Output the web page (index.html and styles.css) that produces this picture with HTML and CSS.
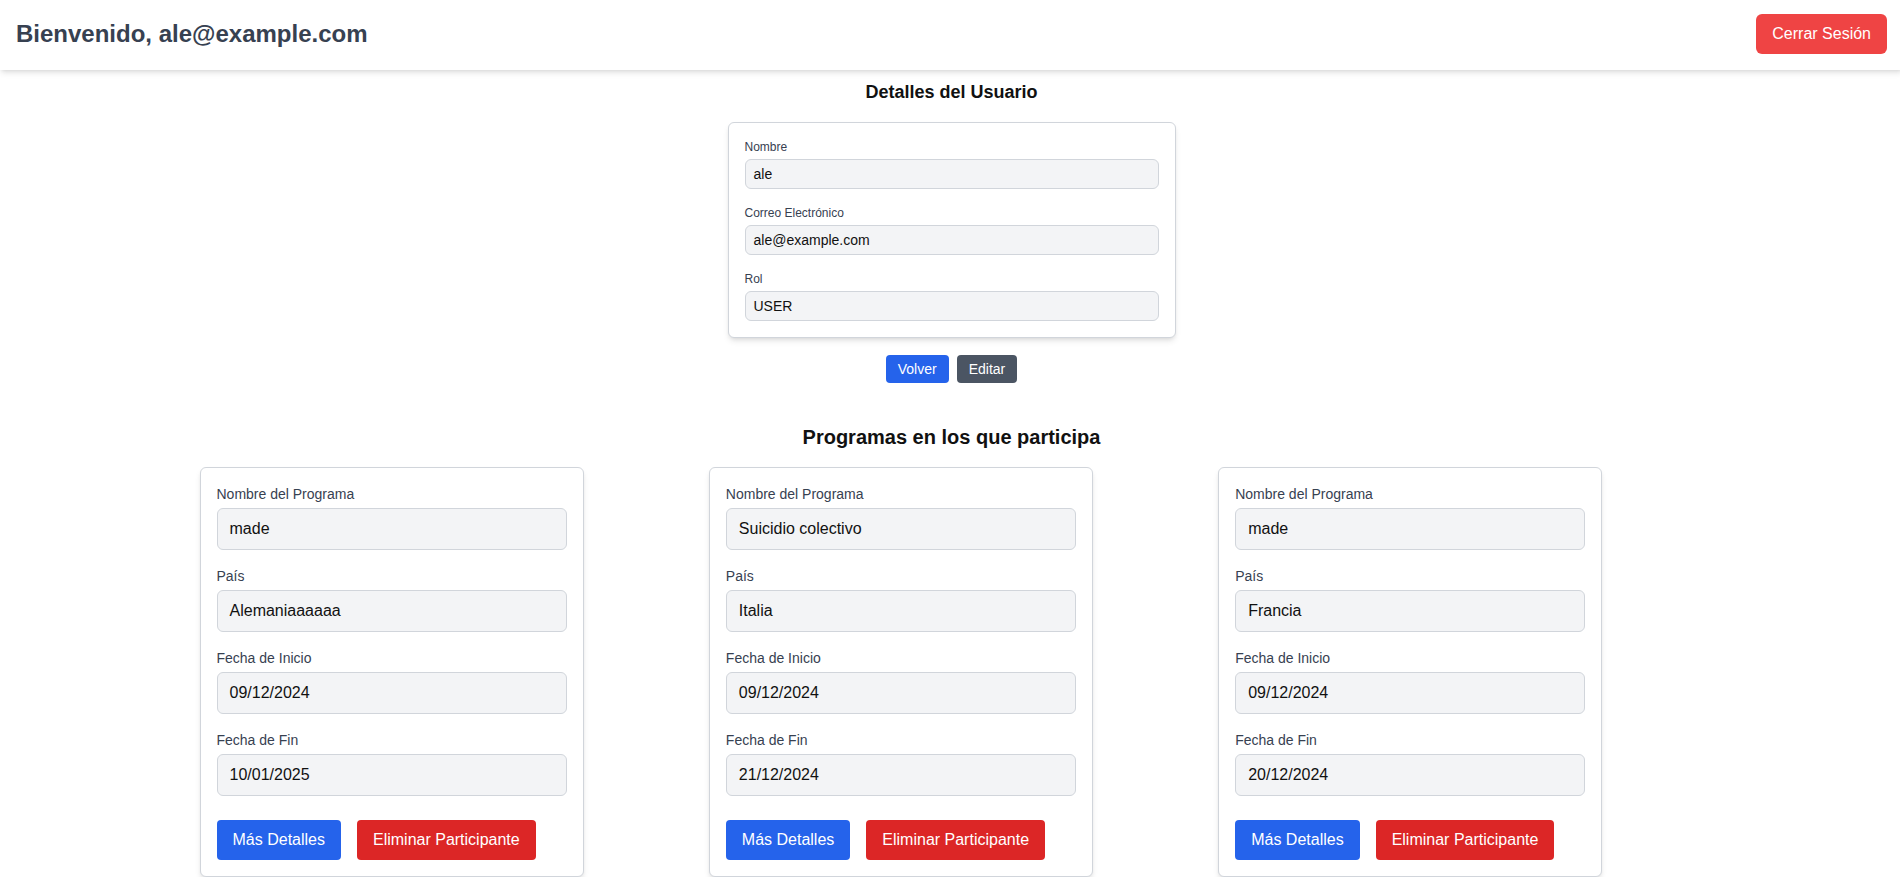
FILE: index.html
```html
<!DOCTYPE html>
<html lang="es">
<head>
<meta charset="utf-8">
<title>Bienvenido</title>
<link rel="stylesheet" href="styles.css">
</head>
<body>
<div class="app">
  <header class="topbar">
    <h1 class="welcome">Bienvenido, ale@example.com</h1>
    <button class="btn btn-logout">Cerrar Sesión</button>
  </header>

  <main class="main">
    <section class="user-section">
      <h2 class="section-title">Detalles del Usuario</h2>
      <div class="user-card">
        <div class="ufield">
          <label class="ulabel">Nombre</label>
          <div class="uinput">ale</div>
        </div>
        <div class="ufield">
          <label class="ulabel">Correo Electrónico</label>
          <div class="uinput">ale@example.com</div>
        </div>
        <div class="ufield">
          <label class="ulabel">Rol</label>
          <div class="uinput">USER</div>
        </div>
      </div>
      <div class="user-actions">
        <button class="btn btn-sm btn-blue">Volver</button>
        <button class="btn btn-sm btn-gray">Editar</button>
      </div>
    </section>

    <section class="programs">
      <h2 class="programs-title">Programas en los que participa</h2>
      <div class="grid">
        <div class="pcard">
          <div class="pfield"><label class="plabel">Nombre del Programa</label><div class="pinput">made</div></div>
          <div class="pfield"><label class="plabel">País</label><div class="pinput">Alemaniaaaaaa</div></div>
          <div class="pfield"><label class="plabel">Fecha de Inicio</label><div class="pinput">09/12/2024</div></div>
          <div class="pfield"><label class="plabel">Fecha de Fin</label><div class="pinput">10/01/2025</div></div>
          <div class="pactions">
            <button class="btn btn-md btn-blue">Más Detalles</button>
            <button class="btn btn-md btn-red">Eliminar Participante</button>
          </div>
        </div>
        <div class="pcard">
          <div class="pfield"><label class="plabel">Nombre del Programa</label><div class="pinput">Suicidio colectivo</div></div>
          <div class="pfield"><label class="plabel">País</label><div class="pinput">Italia</div></div>
          <div class="pfield"><label class="plabel">Fecha de Inicio</label><div class="pinput">09/12/2024</div></div>
          <div class="pfield"><label class="plabel">Fecha de Fin</label><div class="pinput">21/12/2024</div></div>
          <div class="pactions">
            <button class="btn btn-md btn-blue">Más Detalles</button>
            <button class="btn btn-md btn-red">Eliminar Participante</button>
          </div>
        </div>
        <div class="pcard">
          <div class="pfield"><label class="plabel">Nombre del Programa</label><div class="pinput">made</div></div>
          <div class="pfield"><label class="plabel">País</label><div class="pinput">Francia</div></div>
          <div class="pfield"><label class="plabel">Fecha de Inicio</label><div class="pinput">09/12/2024</div></div>
          <div class="pfield"><label class="plabel">Fecha de Fin</label><div class="pinput">20/12/2024</div></div>
          <div class="pactions">
            <button class="btn btn-md btn-blue">Más Detalles</button>
            <button class="btn btn-md btn-red">Eliminar Participante</button>
          </div>
        </div>
      </div>
    </section>
  </main>
</div>
</body>
</html>
```

FILE: styles.css
```css
* { box-sizing: border-box; }

html { overflow: hidden; }

body {
  margin: 0;
  background: #ffffff;
  font-family: "Liberation Sans", Arial, sans-serif;
  color: #111111;
}

/* the original layout width is 1903px (1920 minus a scrollbar) */
.app {
  width: 1903px;
}

.topbar {
  display: flex;
  justify-content: space-between;
  align-items: center;
  padding: 14px 16px 16px 16px;
  background: #ffffff;
  box-shadow: 0 4px 6px -1px rgba(0,0,0,0.1), 0 2px 4px -2px rgba(0,0,0,0.1);
  position: relative;
  z-index: 1;
}

.welcome {
  margin: 0;
  font-size: 24px;
  line-height: 32px;
  font-weight: 700;
  color: #374151;
}

.btn {
  font-family: "Liberation Sans", Arial, sans-serif;
  border: none;
  color: #ffffff;
  cursor: pointer;
  margin: 0;
}

.btn-logout {
  background: #ef4444;
  font-size: 16px;
  line-height: 24px;
  padding: 8px 16px;
  border-radius: 6px;
}

.main {
  max-width: 1536px;
  margin: 0 auto;
  padding: 0 16px;
}

.user-section {
  padding-top: 8px;
}

.section-title {
  margin: 0 0 16px 0;
  text-align: center;
  font-size: 18px;
  line-height: 28px;
  font-weight: 700;
  color: #111111;
}

.user-card {
  max-width: 448px;
  margin: 0 auto;
  padding: 16px;
  border: 1px solid #d1d5db;
  border-radius: 6px;
  background: #ffffff;
  box-shadow: 0 4px 6px -1px rgba(0,0,0,0.1), 0 2px 4px -2px rgba(0,0,0,0.1);
  display: flex;
  flex-direction: column;
  gap: 16px;
}

.ufield {
  display: flex;
  flex-direction: column;
}

.ulabel {
  font-size: 12px;
  line-height: 16px;
  color: #374151;
  margin-bottom: 4px;
}

.uinput {
  font-size: 14px;
  line-height: 20px;
  padding: 4px 8px;
  background: #f3f4f6;
  border: 1px solid #d1d5db;
  border-radius: 6px;
  color: #111111;
}

.user-actions {
  display: flex;
  justify-content: center;
  gap: 8px;
  margin-top: 17px;
}

.btn-sm {
  font-size: 14px;
  line-height: 20px;
  padding: 4px 12px;
  border-radius: 4px;
}

.btn-blue { background: #2563eb; }
.btn-gray { background: #4b5563; }
.btn-red { background: #dc2626; }

.programs {
  margin-top: 40px;
}

.programs-title {
  margin: 0 0 16px 0;
  text-align: center;
  font-size: 20px;
  line-height: 28px;
  font-weight: 700;
  color: #111111;
}

.grid {
  display: grid;
  grid-template-columns: repeat(3, 1fr);
  gap: 24px;
}

.pcard {
  max-width: 384px;
  width: 100%;
  padding: 16px;
  border: 1px solid #d1d5db;
  border-radius: 6px;
  background: #ffffff;
  box-shadow: 0 4px 6px -1px rgba(0,0,0,0.1), 0 2px 4px -2px rgba(0,0,0,0.1);
}

.pfield {
  display: flex;
  flex-direction: column;
  margin-bottom: 16px;
}

.plabel {
  font-size: 14px;
  line-height: 20px;
  color: #374151;
  margin-bottom: 4px;
}

.pinput {
  font-size: 16px;
  line-height: 24px;
  padding: 8px 12px;
  background: #f3f4f6;
  border: 1px solid #d1d5db;
  border-radius: 6px;
  color: #111111;
}

.pactions {
  display: flex;
  gap: 16px;
  padding-top: 8px;
}

.btn-md {
  font-size: 16px;
  line-height: 24px;
  padding: 8px 16px;
  border-radius: 4px;
}
```
